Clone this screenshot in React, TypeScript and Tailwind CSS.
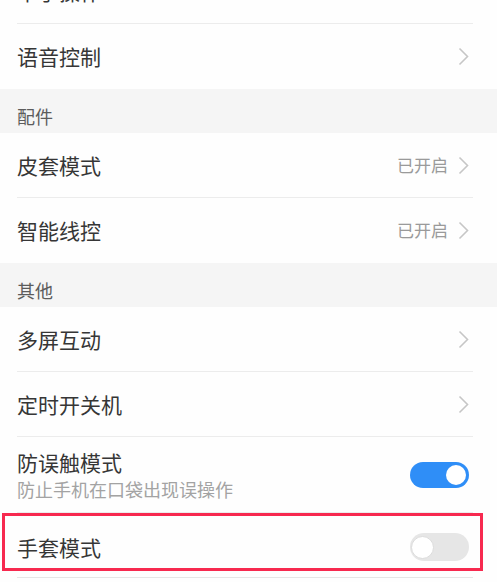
import React from "react";

const Chevron = () => (
  <svg width="11" height="19" viewBox="0 0 11 19" className="shrink-0">
    <polyline points="1.5,1.5 9.5,9.5 1.5,17.5" fill="none" stroke="#c6c6c6" strokeWidth="1.6" />
  </svg>
);

const Row = ({
  title,
  value,
  chevron = true,
  divider = true,
}: {
  title: string;
  value?: string;
  chevron?: boolean;
  divider?: boolean;
}) => (
  <div className="pl-[17px] pr-[24px] bg-[#fefefe]">
    <div
      className={`h-[65px] flex items-center pr-[4px] border-b ${
        divider ? "border-[#ececec]" : "border-transparent"
      }`}
    >
      <span className="flex-1 text-[21px] leading-[26px] text-[#363636]">{title}</span>
      {value && <span className="text-[17px] leading-[22px] text-[#9a9a9a] mr-[10px]">{value}</span>}
      {chevron && <Chevron />}
    </div>
  </div>
);

const Header = ({ title }: { title: string }) => (
  <div className="h-[44px] bg-[#f5f5f5] pl-[17px] pt-[16px]">
    <span className="block text-[18px] leading-[22px] text-[#5c5c5c]">{title}</span>
  </div>
);

export default function App() {
  return (
    <div className="w-[497px] h-[582px] overflow-hidden bg-[#fefefe] font-['Noto_Sans_CJK_SC','Noto_Sans',sans-serif]">
      <div className="-mt-[41px]">
        <Row title="单手操作" />
        <Row title="语音控制" divider={false} />
        <Header title="配件" />
        <Row title="皮套模式" value="已开启" />
        <Row title="智能线控" value="已开启" divider={false} />
        <Header title="其他" />
        <Row title="多屏互动" />
        <Row title="定时开关机" />
        <div className="pl-[17px] pr-[24px] bg-[#fefefe]">
          <div className="h-[76px] flex items-center pr-[4px] border-b border-[#ececec]">
            <div className="flex-1 flex flex-col gap-[3px]">
              <span className="text-[21px] leading-[26px] text-[#363636]">防误触模式</span>
              <span className="text-[18px] leading-[22px] text-[#a3a3a3]">防止手机在口袋出现误操作</span>
            </div>
            <div className="w-[59px] h-[26px] rounded-full bg-[#2f8ef7] flex items-center justify-end pr-[3px]">
              <div className="w-[20px] h-[20px] rounded-full bg-white" />
            </div>
          </div>
        </div>
        <div className="relative pl-[17px] pr-[24px] bg-[#fefefe]">
          <div className="h-[65px] flex items-center pr-[4px] border-b border-[#e6e6e6]">
            <span className="flex-1 text-[21px] leading-[26px] text-[#363636] pt-[3px]">手套模式</span>
            <div className="w-[59px] h-[28px] mt-[4px] rounded-full bg-[#e6e6e6] flex items-center pl-[1px]">
              <div className="w-[23px] h-[23px] rounded-full bg-white border border-[#dcdcdc]" />
            </div>
          </div>
          <div className="absolute left-[2px] top-0 w-[481px] h-[58px] border-[3px] border-[#f7294f]" />
        </div>
      </div>
    </div>
  );
}
